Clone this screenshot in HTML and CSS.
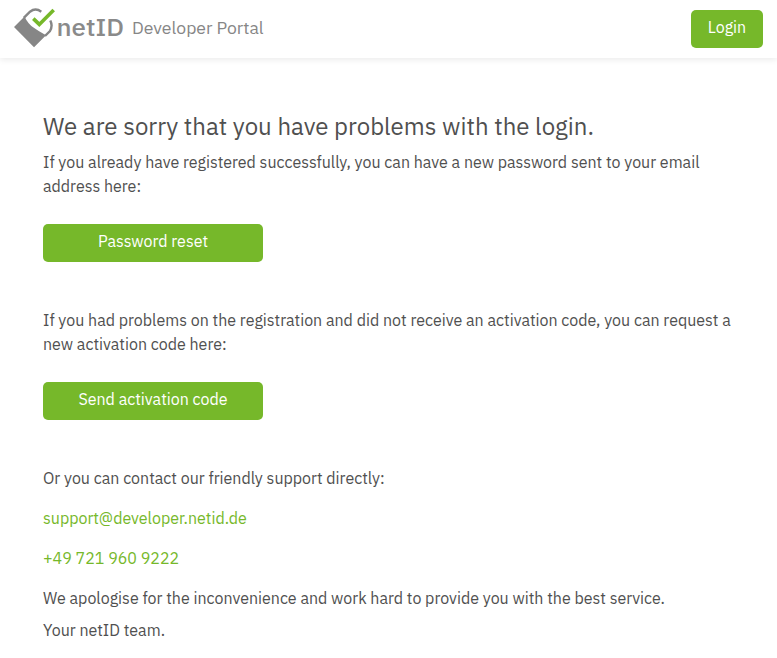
FILE: index.html
```html
<!DOCTYPE html>
<html lang="en">
<head>
<meta charset="utf-8">
<title>netID Developer Portal</title>
<link rel="stylesheet" href="styles.css">
</head>
<body>
<header class="header">
  <a class="brand">
    <svg class="logo" width="112" height="42" viewBox="13 7 112 42">
      <path class="logo-solid" d="M14 27L24.500 16.500Q28 24 33.500 27.500Q39 31.500 46 35.300L34 47.300Z"/>
      <path class="logo-line" d="M23.800 17.800L30 11.700Q35.500 7.500 41.300 11.700M50.300 20.500Q53 26 50 31L45 36"/>
      <path class="logo-check" d="M33.300 18.600L39.300 24.400L53.700 10"/>
      <text class="logo-text" x="56.500" y="36.300" textLength="67.500" lengthAdjust="spacingAndGlyphs">netID</text>
    </svg>
    <span class="portal">Developer Portal</span>
  </a>
  <a class="button login">Login</a>
</header>
<main class="content">
  <h1 class="title">We are sorry that you have problems with the login.</h1>
  <p class="intro">If you already have registered successfully, you can have a new password sent to your email address here:</p>
  <a class="button action">Password reset</a>
  <p class="code">If you had problems on the registration and did not receive an activation code, you can request a new activation code here:</p>
  <a class="button action">Send activation code</a>
  <p class="support">Or you can contact our friendly support directly:</p>
  <p class="contact"><a>support@developer.netid.de</a></p>
  <p class="contact"><a>+49 721 960 9222</a></p>
  <p class="sorry">We apologise for the inconvenience and work hard to provide you with the best service.</p>
  <p class="team">Your netID team.</p>
</main>
</body>
</html>
```
FILE: styles.css
```css
* { box-sizing: border-box; }
body {
  margin: 0;
  background: #fff;
  color: #505050;
  font: 16px/24px "IBM Plex Sans", "Noto Sans", sans-serif;
}
.header {
  height: 58px;
  display: flex;
  justify-content: space-between;
  align-items: flex-start;
  padding: 10px 14px 0 13px;
  box-shadow: 0 2px 6px rgba(0, 0, 0, .08);
}
.brand { display: flex; margin-top: -3px; }
.logo { display: block; }
.logo-solid { fill: #868686; }
.logo-line { fill: none; stroke: #868686; stroke-width: 2.400; }
.logo-check { fill: none; stroke: #76b82a; stroke-width: 3.600; }
.logo-text { fill: #8a8a8a; font: 500 24px "IBM Plex Sans", "Noto Sans", sans-serif; }
.portal { margin-left: 7px; line-height: 41px; font-size: 17.600px; color: #868686; }
.button {
  display: block;
  height: 38px;
  border-radius: 5px;
  background: #76b82a;
  color: #fff;
  line-height: 36px;
  text-align: center;
}
.login { width: 72px; line-height: 35px; }
.action { line-height: 35px; }
.content { padding: 52px 43px 0; }
.title { margin: 0; font-size: 24px; font-weight: 400; line-height: 32px; }
p { margin: 0; }
.intro { margin-top: 8px; }
.action { width: 220px; margin-top: 26px; }
.code, .support { margin-top: 46px; }
.contact, .sorry { margin-top: 16px; }
.contact { color: #76b82a; }
.team { margin-top: 8px; }
```
